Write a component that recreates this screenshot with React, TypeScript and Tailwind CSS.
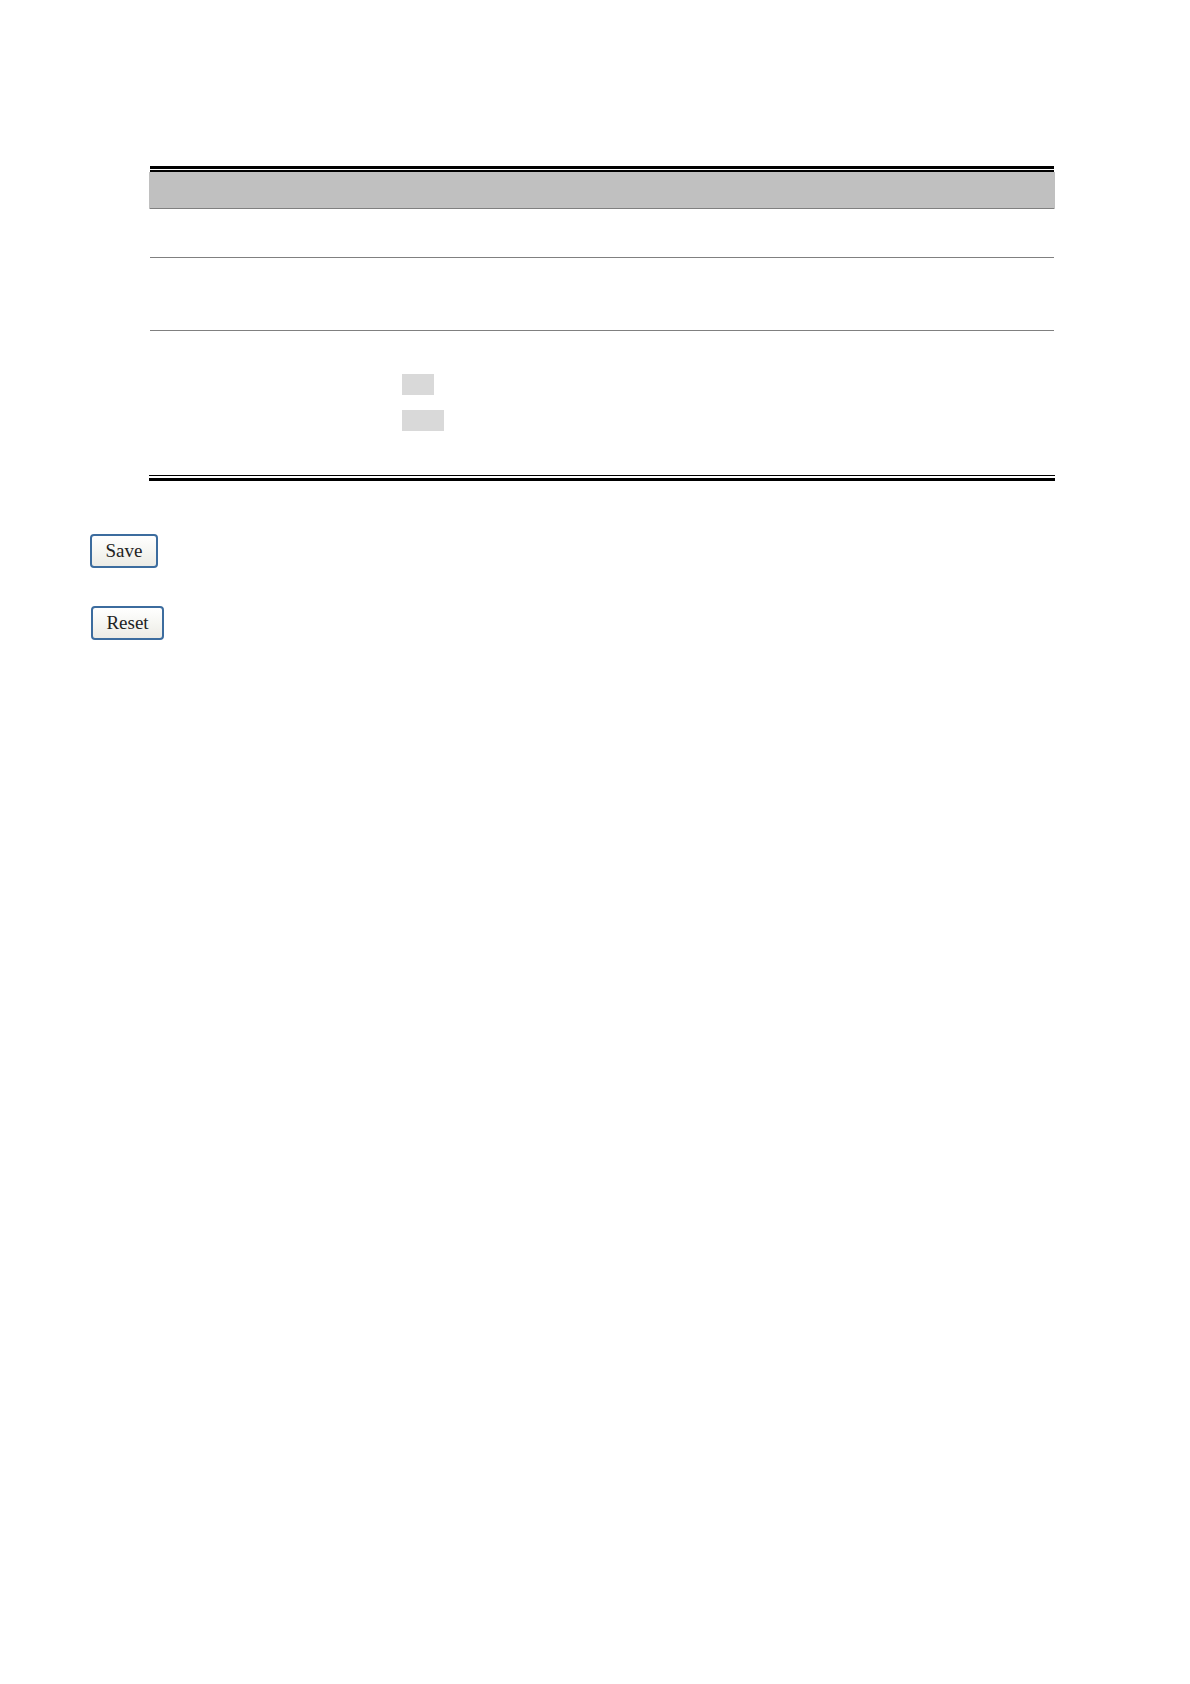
import type { ReactNode } from 'react';

function FormButton({ type, className, children }: { type: 'submit' | 'reset'; className: string; children: ReactNode }) {
  return (
    <button
      type={type}
      className={`h-[34px] rounded-[4px] border-2 border-[#3c6c9e] bg-linear-to-b from-white via-[#f6f6f2] to-[#ecebe5] font-['Liberation_Serif',serif] text-[19px] leading-[28px] text-[#222] ${className}`}
    >
      {children}
    </button>
  );
}

export default function App() {
  return (
    <main className="min-h-screen bg-white pt-[166px] pr-[135px] pl-[90px]">
      <form onSubmit={(e) => e.preventDefault()}>
        <div className="ml-[59px]">
          <div className="mx-px h-[6px] border-t-3 border-b-2 border-black" />
          <div className="px-px">
            <table className="w-full table-fixed border-separate border-spacing-0">
              <colgroup>
                <col className="w-[252px]" />
                <col />
              </colgroup>
              <thead>
                <tr className="h-[37px]">
                  <th className="border-b border-[#808080] bg-[#c0c0c0] p-0 shadow-[-1px_0_#c0c0c0]" />
                  <th className="border-b border-[#808080] bg-[#c0c0c0] p-0 shadow-[1px_0_#c0c0c0]" />
                </tr>
              </thead>
              <tbody>
                <tr className="h-[49px]">
                  <td className="border-b border-[#808080] p-0" />
                  <td className="border-b border-[#808080] p-0" />
                </tr>
                <tr className="h-[73px]">
                  <td className="border-b border-[#808080] p-0" />
                  <td className="border-b border-[#808080] p-0" />
                </tr>
                <tr className="h-[144px]">
                  <td className="p-0" />
                  <td className="p-0 pb-[2px]">
                    <div className="flex flex-col gap-[15px]">
                      <span className="h-[21px] w-8 bg-[#d9d9d9]" />
                      <span className="h-[21px] w-[42px] bg-[#d9d9d9]" />
                    </div>
                  </td>
                </tr>
              </tbody>
            </table>
          </div>
          <div className="h-[6px] border-t border-b-3 border-black" />
        </div>

        <div className="mt-[53px] flex flex-col items-start gap-[38px]">
          <FormButton type="submit" className="w-[68px]">Save</FormButton>
          <FormButton type="reset" className="ml-px w-[73px]">Reset</FormButton>
        </div>
      </form>
    </main>
  );
}
